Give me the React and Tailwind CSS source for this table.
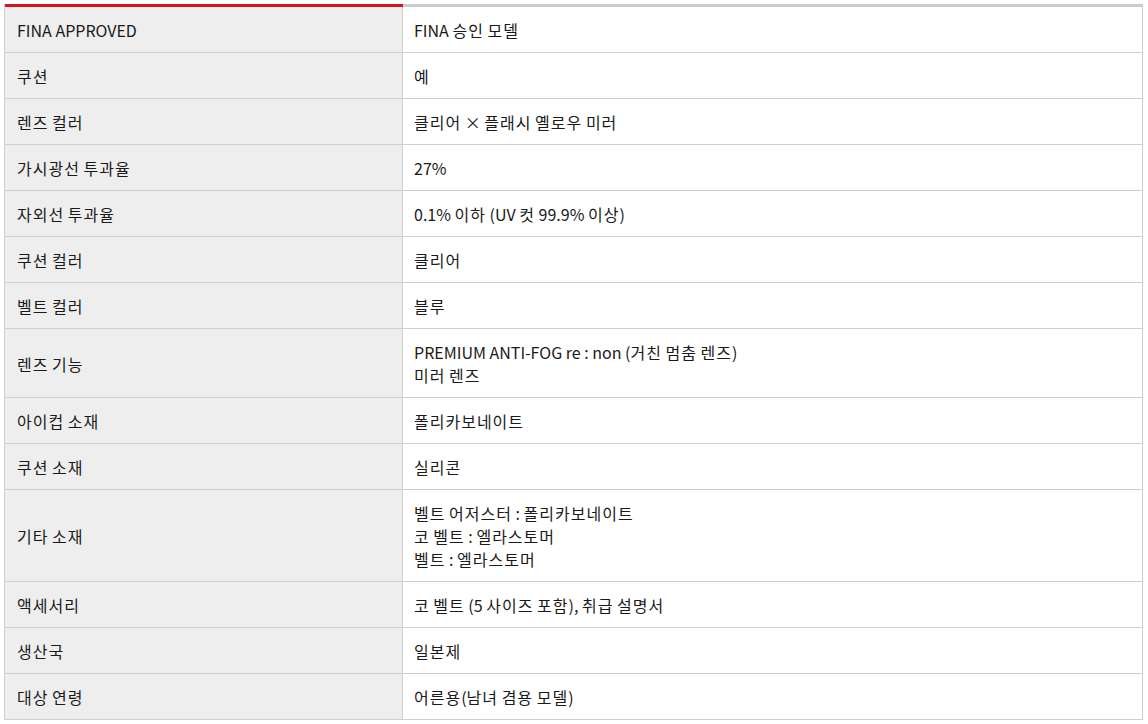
import React from "react";

const rows = [
  ["FINA APPROVED", ["FINA 승인 모델"]],
  ["쿠션", ["예"]],
  ["렌즈 컬러", ["클리어 × 플래시 옐로우 미러"]],
  ["가시광선 투과율", ["27%"]],
  ["자외선 투과율", ["0.1% 이하 (UV 컷 99.9% 이상)"]],
  ["쿠션 컬러", ["클리어"]],
  ["벨트 컬러", ["블루"]],
  ["렌즈 기능", ["PREMIUM ANTI-FOG re : non (거친 멈춤 렌즈)", "미러 렌즈"]],
  ["아이컵 소재", ["폴리카보네이트"]],
  ["쿠션 소재", ["실리콘"]],
  ["기타 소재", ["벨트 어저스터 : 폴리카보네이트", "코 벨트 : 엘라스토머", "벨트 : 엘라스토머"]],
  ["액세서리", ["코 벨트 (5 사이즈 포함), 취급 설명서"]],
  ["생산국", ["일본제"]],
  ["대상 연령", ["어른용(남녀 겸용 모델)"]],
];

// hangul runs get a touch of tracking, the original font sets them wider
function Txt({ s }) {
  return s.split(/([가-힣]+)/).map((part, i) =>
    /[가-힣]/.test(part) ? (
      <span key={i} className="tracking-[1px]">
        {part}
      </span>
    ) : (
      part
    )
  );
}

export default function App() {
  return (
    <div className="bg-white w-[1148px] h-[724px] pt-[4px] pl-[4px] font-['Noto_Sans_CJK_KR','Noto_Sans',sans-serif] text-[16px] leading-[23px] text-[#1a1a1a]">
      <div className="w-[1139px] border-l border-r border-b border-[#cfcfcf]">
        {/* top bar: red over heading column, gray over value column */}
        <div className="flex h-[3px]">
          <div className="w-[398px] bg-[#d7141e]" />
          <div className="flex-1 bg-[#cccccc]" />
        </div>
        {rows.map(([label, values], i) => (
          <div
            key={label}
            className={
              "flex " + (i < rows.length - 1 ? "border-b border-[#cfcfcf]" : "")
            }
          >
            <div className="w-[398px] shrink-0 bg-[#eeeeee] border-r border-[#cfcfcf] px-[12px] pt-[12px] pb-[10px] flex items-center">
              <span>
                <Txt s={label} />
              </span>
            </div>
            <div className="flex-1 px-[11px] pt-[12px] pb-[10px]">
              {values.map((v) => (
                <div key={v}>
                  <Txt s={v} />
                </div>
              ))}
            </div>
          </div>
        ))}
      </div>
    </div>
  );
}
